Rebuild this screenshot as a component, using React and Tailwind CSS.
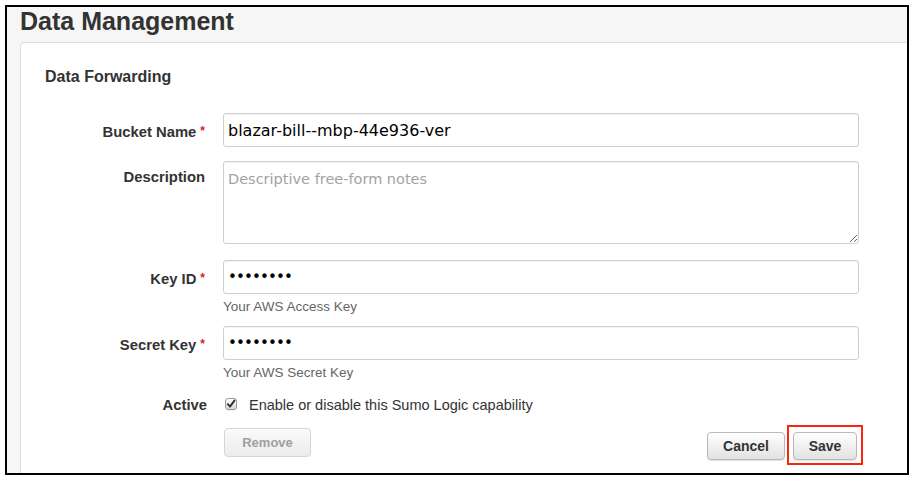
export default function App() {
  const inputCls =
    "w-[636px] h-[34px] border border-[#cfcfcf] rounded-[3px] px-[4px] bg-white text-black text-[16px] font-['DejaVu_Sans',Verdana,sans-serif] outline-none shadow-[inset_0_1px_1px_rgba(0,0,0,0.05)]";
  const pwCls =
    "w-[636px] h-[34px] border border-[#cfcfcf] rounded-[3px] px-[4px] bg-white text-black text-[15px] tracking-[-0.85px] font-['DejaVu_Sans',Verdana,sans-serif] outline-none shadow-[inset_0_1px_1px_rgba(0,0,0,0.05)]";
  const labelCls =
    "w-[162px] shrink-0 text-right text-[14.8px] leading-[20px] font-bold text-[#333]";
  const Star = () => (
    <span className="text-[#e02020] text-[12px] align-top relative top-[-1px] ml-[4px] mr-[2px]">*</span>
  );

  return (
    <div className="w-[914px] h-[481px] bg-white pt-[5px] pl-[5px] font-['Liberation_Sans',Arial,sans-serif]">
      <div className="w-[904px] h-[470px] border-2 border-black bg-[#f6f6f6] overflow-hidden pl-[13px] flex flex-col">
        <h1 className="text-[25px] leading-[28px] font-bold text-[#333] mb-[7px] shrink-0">
          Data Management
        </h1>
        <div className="w-[1000px] shrink-0 bg-white border border-[#dddddd] rounded-[4px] pl-[24px] pt-[24px] pb-[40px]">
          <h2 className="text-[16px] leading-[20px] font-bold text-[#333]">Data Forwarding</h2>

          <div className="w-[814px] mt-[26px] flex flex-col">
            {/* Bucket Name */}
            <div className="flex items-start">
              <div className={labelCls + " pt-[9px]"}>
                Bucket Name
                <Star />
              </div>
              <div className="ml-[16px]">
                <input
                  className={inputCls}
                  defaultValue="blazar-bill--mbp-44e936-ver"
                />
              </div>
            </div>

            {/* Description */}
            <div className="flex items-start mt-[14px]">
              <div className={labelCls + " pt-[6px] pr-[2px]"}>Description</div>
              <div className="ml-[16px] flex">
                <textarea
                  className="w-[636px] h-[83px] border border-[#cfcfcf] rounded-[3px] px-[4px] pt-[7px] leading-[20px] bg-white text-black text-[14.5px] font-['DejaVu_Sans',Verdana,sans-serif] outline-none placeholder:text-[#a3a3a3] shadow-[inset_0_1px_1px_rgba(0,0,0,0.05)]"
                  placeholder="Descriptive free-form notes"
                />
              </div>
            </div>

            {/* Key ID */}
            <div className="flex items-start mt-[16px]">
              <div className={labelCls + " pt-[9px]"}>
                Key ID
                <Star />
              </div>
              <div className="ml-[16px] flex flex-col">
                <input type="password" className={pwCls} defaultValue="abcdefgh" />
                <div className="mt-[5px] text-[13.5px] leading-[16px] text-[#666]">
                  Your AWS Access Key
                </div>
              </div>
            </div>

            {/* Secret Key */}
            <div className="flex items-start mt-[11px]">
              <div className={labelCls + " pt-[9px]"}>
                Secret Key
                <Star />
              </div>
              <div className="ml-[16px] flex flex-col">
                <input type="password" className={pwCls} defaultValue="abcdefgh" />
                <div className="mt-[5px] text-[13.5px] leading-[16px] text-[#666]">
                  Your AWS Secret Key
                </div>
              </div>
            </div>

            {/* Active */}
            <div className="flex items-start mt-[14px]">
              <div className={labelCls}>Active</div>
              <div className="ml-[16px] flex items-start">
                <div className="ml-[2px] mt-[3px] w-[12px] h-[12px] rounded-[3px] border border-[#9a9a9a] bg-linear-to-b from-[#fdfdfd] to-[#d9d9d9] flex items-center justify-center shadow-[0_1px_0_rgba(0,0,0,0.05)]">
                  <svg width="10" height="10" viewBox="0 0 10 10">
                    <path
                      d="M1.8 5.2 L4 7.6 L8.4 1.6"
                      fill="none"
                      stroke="#2e2e2e"
                      strokeWidth="1.9"
                      strokeLinecap="round"
                      strokeLinejoin="round"
                    />
                  </svg>
                </div>
                <span className="ml-[12px] text-[14.5px] leading-[20px] text-[#333]">
                  Enable or disable this Sumo Logic capability
                </span>
              </div>
            </div>

            {/* Buttons */}
            <div className="flex items-start mt-[13px] pl-[179px]">
              <button className="w-[87px] h-[29px] rounded-[4px] border border-[#d6d6d6] bg-linear-to-b from-[#fafafa] to-[#ececec] text-[13px] font-bold text-[#a0a0a0]">
                Remove
              </button>
              <div className="ml-auto mr-[2px] mt-[4px] flex gap-[8px]">
                <button className="w-[78px] h-[28px] rounded-[4px] border border-[#b9b9b9] bg-linear-to-b from-[#ffffff] to-[#e2e2e2] text-[14px] font-bold text-[#333] shadow-[0_1px_1px_rgba(0,0,0,0.12)]">
                  Cancel
                </button>
                <button className="relative w-[64px] h-[28px] rounded-[4px] border border-[#b9b9b9] bg-linear-to-b from-[#ffffff] to-[#e2e2e2] text-[14px] font-bold text-[#333] shadow-[0_1px_1px_rgba(0,0,0,0.12)]">
                  Save
                  <span className="absolute -left-[7px] -right-[7px] -top-[8px] -bottom-[6px] border-2 border-[#f7260c] pointer-events-none" />
                </button>
              </div>
            </div>
          </div>
        </div>
      </div>
    </div>
  );
}
